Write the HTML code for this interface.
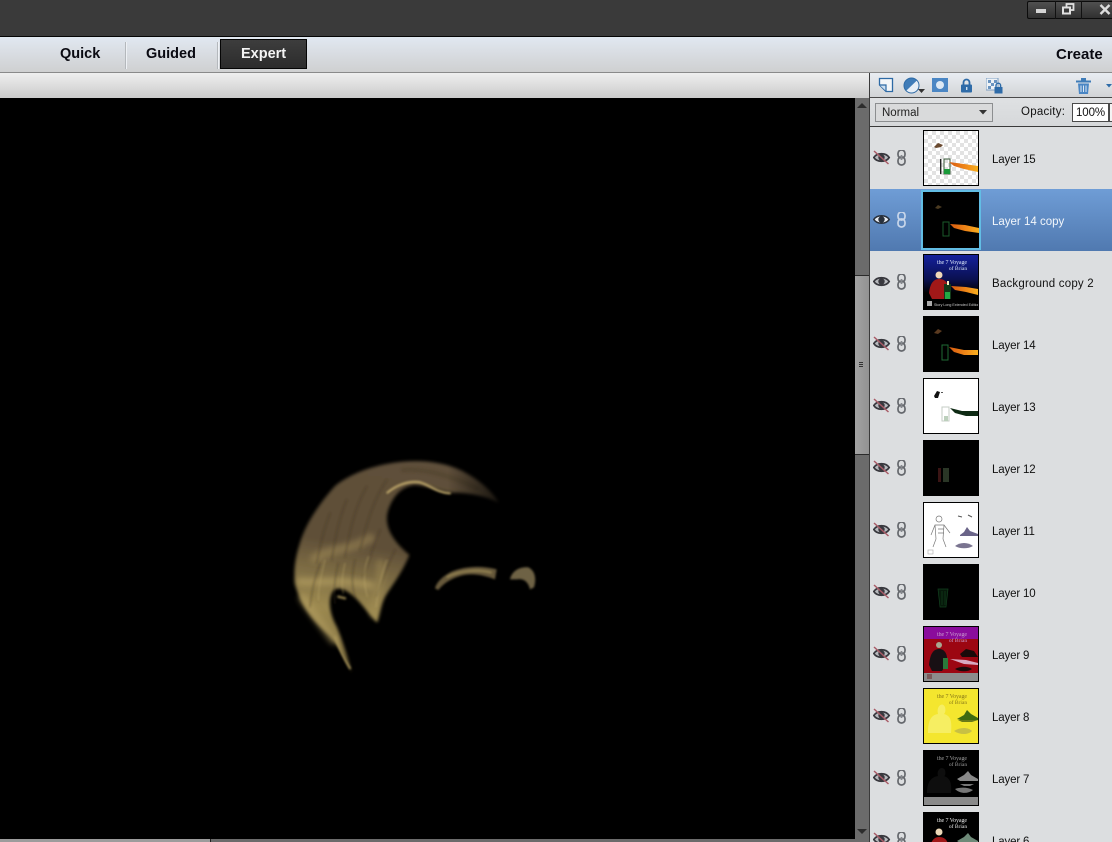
<!DOCTYPE html>
<html lang="en">
<head>
<meta charset="utf-8">
<title>Photoshop Elements - Expert</title>
<style>
html,body{margin:0;padding:0;width:1112px;height:842px;overflow:hidden;background:#000}
*{box-sizing:border-box}
body{position:relative;font-family:"Liberation Sans",sans-serif;color:#111}
.a{position:absolute}
.tab{position:absolute;font-weight:bold;font-size:14.5px;line-height:18px;color:#0a0a12;white-space:nowrap}
.row{position:absolute;left:870px;width:242px;height:62px}
.row .lbl{position:absolute;left:122px;top:24px;padding-top:1px;font-size:11.5px;line-height:16px;letter-spacing:-.15px;color:#111;white-space:nowrap}
.row.sel{background:linear-gradient(#6f9dd6,#5079b0)}
.row.sel .lbl{color:#f2f6fb}
.row svg.ic{position:absolute;left:3px;top:23px}
.th{position:absolute;left:53px;top:3px;width:56px;height:56px;border:1px solid #000;display:block}
.th>*{filter:blur(.35px)}
</style>
</head>
<body>
<svg width="0" height="0" style="position:absolute">
<defs>
<pattern id="chk" width="8" height="8" patternUnits="userSpaceOnUse"><rect width="8" height="8" fill="#fff"/><rect width="4" height="4" fill="#e2e2e2"/><rect x="4" y="4" width="4" height="4" fill="#e2e2e2"/></pattern>
<linearGradient id="fl" x1="0" x2="1"><stop offset="0" stop-color="#d85a10"/><stop offset=".6" stop-color="#f08a18"/><stop offset="1" stop-color="#f8b020"/></linearGradient>
<linearGradient id="bl" x1="0" x2="0" y1="0" y2="1"><stop offset="0" stop-color="#14209c"/><stop offset=".45" stop-color="#0a1050"/><stop offset=".7" stop-color="#000"/></linearGradient>
<linearGradient id="hair" gradientUnits="userSpaceOnUse" x1="300" y1="40" x2="200" y2="660"><stop offset="0" stop-color="#5e4f3a"/><stop offset=".4" stop-color="#5f4f38"/><stop offset=".55" stop-color="#7d6c44"/><stop offset=".72" stop-color="#9c8950"/><stop offset="1" stop-color="#7a6a3e"/></linearGradient>
<linearGradient id="fade" gradientUnits="userSpaceOnUse" x1="0" x2="670" y1="0" y2="0"><stop offset=".75" stop-color="#fff"/><stop offset="1" stop-color="#333"/></linearGradient>
<mask id="m" maskUnits="userSpaceOnUse" x="0" y="0" width="810" height="705"><rect width="810" height="705" fill="url(#fade)"/></mask>
<filter id="b1" x="-10%" y="-10%" width="120%" height="120%"><feGaussianBlur stdDeviation="5"/></filter>
<filter id="b2" x="-20%" y="-20%" width="140%" height="140%"><feGaussianBlur stdDeviation="3"/></filter>
<filter id="b3" x="-20%" y="-20%" width="140%" height="140%"><feGaussianBlur stdDeviation="9"/></filter>
<g id="eye"><path d="M.8 7.5C4 2.5 13 2.5 16.2 7.5C13 12.5 4 12.5 .8 7.5Z" fill="#b8babe" stroke="#38383e" stroke-width="1.7"/><circle cx="8.5" cy="7.5" r="3.2" fill="#38383e"/></g>
<g id="eyex"><use href="#eye"/><path d="M1 1L15.5 14" stroke="#a85a66" stroke-width="1.5"/></g>
<g id="eyeon"><path d="M.8 7.5C4 2.5 13 2.5 16.2 7.5C13 12.5 4 12.5 .8 7.5Z" fill="#e8edf4" stroke="#28303c" stroke-width="1.6"/><circle cx="8.5" cy="7.5" r="3.2" fill="#28303c"/></g>
<g id="chain" fill="none" stroke="#65686d" stroke-width="1.7"><rect x="2.5" y="0" width="7" height="8" rx="3.4"/><rect x="2.5" y="7" width="7" height="8" rx="3.4"/><path d="M6 5V10" stroke="#85888d"/></g>
<g id="chainw" fill="none" stroke="#c8d6ea" stroke-width="1.7"><rect x="2.5" y="0" width="7" height="8" rx="3.4"/><rect x="2.5" y="7" width="7" height="8" rx="3.4"/></g>
<g id="title" font-family="Liberation Serif,serif" text-anchor="middle"><text x="28" y="9" font-size="6" letter-spacing="-.1">the 7 Voyage</text><text x="34" y="15" font-size="5.5">of Brian</text></g>
</defs>
</svg>

<!-- top bar -->
<div class="a" style="left:0;top:0;width:1112px;height:36px;background:#3a3a3a"></div>
<div class="a" style="left:0;top:36px;width:1112px;height:1px;background:#050505"></div>
<!-- window buttons -->
<div class="a" style="left:1027px;top:1px;width:85px;height:18px;background:linear-gradient(#505050,#303030);border:1px solid #0c0c0c;border-right:0;border-radius:2px 0 0 2px"></div>
<div class="a" style="left:1055px;top:1px;width:1px;height:18px;background:#111"></div>
<div class="a" style="left:1081px;top:1px;width:1px;height:18px;background:#111"></div>
<div class="a" style="left:1036px;top:9px;width:10px;height:4px;background:#d4d4d4"></div>
<svg class="a" style="left:1062px;top:3px" width="13" height="12"><rect x="4.5" y="1" width="7" height="6" fill="none" stroke="#e0e0e0" stroke-width="1.8"/><rect x="1" y="4.5" width="7" height="6" fill="#3a3a3a" stroke="#e0e0e0" stroke-width="2"/></svg>
<svg class="a" style="left:1099px;top:4px" width="13" height="11"><path d="M1.5 1L10.5 10M10.5 1L1.5 10" stroke="#dcdcdc" stroke-width="2.4"/></svg>

<!-- mode bar -->
<div class="a" style="left:0;top:37px;width:1112px;height:36px;background:linear-gradient(#e1e8f1,#cfd0d1);border-bottom:1px solid #8a8a8a"></div>
<div class="tab" style="left:60px;top:45px">Quick</div>
<div class="a" style="left:125px;top:42px;width:1px;height:27px;background:#b4b8bc;box-shadow:1px 0 0 #eef1f5"></div>
<div class="tab" style="left:146px;top:45px">Guided</div>
<div class="a" style="left:217px;top:42px;width:1px;height:27px;background:#b4b8bc;box-shadow:1px 0 0 #eef1f5"></div>
<div class="a" style="left:220px;top:39px;width:87px;height:30px;background:linear-gradient(#3d3d3d,#2c2c2c);border:1px solid #050505"></div>
<div class="tab" style="left:241px;top:45px;color:#f4f4f4">Expert</div>
<div class="tab" style="left:1056px;top:46px;font-size:15px">Create</div>

<!-- options strip -->
<div class="a" style="left:0;top:73px;width:870px;height:25px;background:linear-gradient(#efefef,#cbcbcb)"></div>

<!-- canvas -->
<div class="a" style="left:0;top:98px;width:855px;height:744px;background:#000"></div>
<svg class="a" style="left:280px;top:450px" width="270" height="235" viewBox="0 0 810 705">
<g mask="url(#m)">
<g filter="url(#b1)">
<path d="M215 668C195 620 175 590 150 560C115 525 75 490 52 425C38 385 42 335 58 285C72 235 105 175 165 108C215 68 290 42 370 35C430 30 490 36 545 62C590 85 630 115 657 158C610 135 565 130 530 128C490 130 450 108 405 105C365 108 335 140 322 190C315 230 335 270 388 315C365 370 340 400 315 440C300 470 298 495 292 518C270 500 240 450 210 430C190 415 170 408 158 425C142 450 150 495 170 530C190 580 205 630 215 668Z" fill="url(#hair)"/>
</g>
<g filter="url(#b3)" fill="none" stroke-linecap="round">
<path d="M105 325C150 295 215 300 270 265" stroke="#a8925a" stroke-width="30" opacity=".45"/>
<path d="M60 395C110 400 180 385 270 405" stroke="#bba565" stroke-width="24" opacity=".55"/>
<path d="M68 445C95 485 130 530 160 570" stroke="#b8a262" stroke-width="26" opacity=".5"/>
<path d="M300 340C305 390 290 440 282 490" stroke="#a8945a" stroke-width="26" opacity=".4"/>
</g>
<g filter="url(#b2)" fill="none" stroke-linecap="round">
<path d="M322 128C350 105 385 92 420 97C450 105 470 128 510 130" stroke="#c8b070" stroke-width="6"/>
<path d="M165 560C180 600 195 630 210 655" stroke="#a8945a" stroke-width="6"/>
<path d="M175 440L195 445" stroke="#94824e" stroke-width="7"/>
<path d="M150 190C130 240 120 290 110 340M200 150C175 210 165 270 155 330M260 110C225 170 210 240 195 320M320 90C280 150 260 220 240 300M300 240C285 280 265 330 250 380M345 300C325 340 305 390 290 440M120 340C105 380 95 420 90 470M175 340C165 380 160 420 165 460M225 330C215 370 215 410 225 440" stroke="#3e3322" stroke-width="3" opacity=".55"/>
<path d="M135 330C125 370 115 410 115 450M195 340C185 380 185 410 190 430M265 320C250 360 250 400 262 440M320 330C305 370 295 420 288 470" stroke="#c8b270" stroke-width="3" opacity=".5"/>
<path d="M370 60C420 55 500 70 590 115" stroke="#4e402c" stroke-width="14" opacity=".5"/>
</g>
</g>
<g filter="url(#b2)">
<path d="M465 415C470 395 490 378 515 365C550 350 600 345 650 358L645 388C610 375 575 368 540 378C515 385 490 400 475 420Z" fill="#66583a"/>
<path d="M690 388C695 365 715 350 745 352C765 362 770 385 762 412L750 418C745 395 730 385 712 388Z" fill="#6e6244"/>
<path d="M500 382C540 360 595 358 635 368" stroke="#a08e58" stroke-width="4" fill="none"/>
</g>
</svg>

<!-- vertical scrollbar -->
<div class="a" style="left:855px;top:98px;width:14px;height:744px;background:#6b6b6b"></div>
<div class="a" style="left:855px;top:275px;width:14px;height:180px;background:linear-gradient(90deg,#a2a2a2,#929292);border-top:1px solid #2a2a2a;border-bottom:1px solid #2a2a2a"></div>
<div class="a" style="left:859px;top:362px;width:4px;height:1px;background:#333;box-shadow:0 2px 0 #333,0 4px 0 #333"></div>
<svg class="a" style="left:857px;top:103px" width="10" height="6"><path d="M5 0L10 5H0Z" fill="#2c2c2c"/></svg>
<svg class="a" style="left:857px;top:829px" width="10" height="6"><path d="M0 0H10L5 5Z" fill="#2c2c2c"/></svg>
<!-- horizontal scrollbar -->
<div class="a" style="left:0;top:839px;width:210px;height:3px;background:#9c9c9c"></div>
<div class="a" style="left:210px;top:839px;width:645px;height:3px;background:#6b6b6b;border-left:1px solid #222"></div>

<!-- panel -->
<div class="a" style="left:869px;top:73px;width:243px;height:769px;background:#dcdee0;border-left:1px solid #3a3a3a"></div>
<div class="a" style="left:870px;top:73px;width:242px;height:25px;background:linear-gradient(#e9edf2,#d2d4d6);border-bottom:1px solid #4a4a4a"></div>
<div class="a" style="left:870px;top:98px;width:242px;height:29px;background:linear-gradient(#dfe1e3,#d6d8da);border-bottom:1px solid #3a3a3a"></div>

<!-- panel icons -->
<svg class="a" style="left:878px;top:77px" width="16" height="16"><path d="M1.5 1.5H14.5V14.5H8L1.5 8Z" fill="#f4f6f8" stroke="#2d6aa5" stroke-width="1.3"/><path d="M8 14V8H1.5" fill="#cfe0f0" stroke="#2d6aa5" stroke-width="1.2"/></svg>
<svg class="a" style="left:903px;top:77px" width="22" height="18"><circle cx="8.5" cy="8.5" r="7.5" fill="#3f7cb8"/><path d="M3.2 13.8A7.5 7.5 0 0 0 14 3.4Z" fill="#e6eef6"/><circle cx="8.5" cy="8.5" r="7.5" fill="none" stroke="#2d6aa5"/><path d="M15 12H22L18.5 16Z" fill="#333"/></svg>
<svg class="a" style="left:932px;top:78px" width="16" height="14"><rect width="16" height="14" fill="#4a86c4"/><circle cx="8" cy="7" r="4" fill="#dce8f4"/></svg>
<svg class="a" style="left:960px;top:78px" width="13" height="15"><path d="M3.5 7V4.5a3 3 0 0 1 6 0V7" fill="none" stroke="#2e6ba8" stroke-width="1.8"/><rect x="1" y="6.5" width="11" height="8" rx="1" fill="#2e6ba8"/><rect x="6" y="9" width="1.4" height="3" fill="#cfe0f0"/></svg>
<svg class="a" style="left:986px;top:78px" width="17" height="16"><rect x="0" y="0" width="12" height="12" fill="#eef2f6" stroke="#7a9cc0"/><rect x="2" y="2" width="3" height="3" fill="#6a94c0"/><rect x="8" y="2" width="3" height="3" fill="#6a94c0"/><rect x="5" y="5" width="3" height="3" fill="#6a94c0"/><rect x="2" y="8" width="3" height="3" fill="#6a94c0"/><path d="M10 9V7.5a2.3 2.3 0 0 1 4.6 0V9" fill="none" stroke="#2e6ba8" stroke-width="1.4"/><rect x="8.5" y="9" width="8" height="6.5" fill="#2e6ba8"/></svg>
<svg class="a" style="left:1076px;top:78px" width="15" height="16"><rect x="0" y="2.5" width="15" height="2" fill="#3f7cb8"/><rect x="5" y="0" width="5" height="2.5" fill="#3f7cb8"/><path d="M2 5.5H13L12 16H3Z" fill="#4a86c4"/><path d="M5 7.5V14M7.5 7.5V14M10 7.5V14" stroke="#dce8f4"/></svg>
<svg class="a" style="left:1106px;top:84px" width="6" height="4"><path d="M0 0H6L3 3.5Z" fill="#2e6ba8"/></svg>

<!-- blend row -->
<div class="a" style="left:875px;top:103px;width:118px;height:19px;background:#d9dadb;border:1px solid #8c8e90;font-size:11.5px;line-height:18px;padding-left:6px;color:#222">Normal</div>
<svg class="a" style="left:979px;top:110px" width="8" height="5"><path d="M0 0H8L4 4.5Z" fill="#333"/></svg>
<div class="a" style="left:1021px;top:104px;font-size:11.5px;line-height:16px;letter-spacing:.25px;color:#111">Opacity:</div>
<div class="a" style="left:1072px;top:103px;width:37px;height:19px;background:#fff;border:1px solid #4a4a4a;font-size:11.5px;line-height:18px;padding-left:3px;letter-spacing:-.1px;color:#111">100%</div>
<div class="a" style="left:1109px;top:103px;width:3px;height:19px;background:#f4f4f4;border:1px solid #4a4a4a;border-right:0"></div>

<!-- layers -->
<div class="row" style="top:127px"><svg class="ic" width="40" height="16"><use href="#eyex"/><use href="#chain" x="22.5"/></svg>
<svg class="th" viewBox="0 0 54 54"><rect width="54" height="54" fill="url(#chk)"/><path d="M10 16L14 12L19 14L17 16L12 17Z" fill="#6a4a30"/><rect x="16" y="28" width="1.4" height="15" fill="#222"/><rect x="20" y="28" width="6" height="15" fill="none" stroke="#3a5a3a"/><rect x="20" y="38" width="6" height="5" fill="#1a9a3a"/><path d="M25 31L40 33L54 35V41L40 38L30 35Z" fill="url(#fl)"/></svg>
<div class="lbl">Layer 15</div></div>

<div class="row sel" style="top:189px"><svg class="ic" width="40" height="16"><use href="#eyeon"/><use href="#chainw" x="22.5"/></svg>
<svg class="th" style="left:51px;top:1px;width:60px;height:60px;border:2px solid #62bde4" viewBox="0 0 56 56"><rect width="56" height="56" fill="#000"/><path d="M12 16L15 13L19 15L15 17Z" fill="#4a3a20"/><rect x="20" y="30" width="6" height="14" fill="none" stroke="#1a5a2a"/><path d="M27 32L42 33L56 36V41L42 39L31 36Z" fill="url(#fl)"/></svg>
<div class="lbl" style="letter-spacing:0">Layer 14 copy</div></div>

<div class="row" style="top:251px"><svg class="ic" width="40" height="16"><use href="#eye"/><use href="#chain" x="22.5"/></svg>
<svg class="th" viewBox="0 0 54 54"><rect width="54" height="54" fill="url(#bl)"/><g fill="#d8e4f8"><use href="#title"/></g><circle cx="15" cy="20" r="3.5" fill="#f0d8b8"/><path d="M5 38C6 28 10 24 15 24C21 24 25 28 24 36L20 44H8Z" fill="#a01818"/><rect x="20" y="29" width="7" height="15" fill="#123a1a"/><rect x="21" y="37" width="5" height="7" fill="#22a844"/><path d="M23 26h2v4h-2z" fill="#f8f0c0"/><path d="M27 31L42 32L54 34V40L42 37L31 35Z" fill="url(#fl)"/><rect x="3" y="46" width="5" height="5" fill="#aaa"/><text x="10" y="51" font-size="3.6" fill="#ccc" font-family="Liberation Sans,sans-serif">Story Long Extended Edition</text></svg>
<div class="lbl" style="letter-spacing:.2px">Background copy 2</div></div>

<div class="row" style="top:313px"><svg class="ic" width="40" height="16"><use href="#eyex"/><use href="#chain" x="22.5"/></svg>
<svg class="th" viewBox="0 0 54 54"><rect width="54" height="54" fill="#000"/><path d="M10 16L14 12L18 14L14 17Z" fill="#5a3a20"/><rect x="18" y="28" width="6" height="15" fill="none" stroke="#1f6a34"/><path d="M25 30L40 33L54 33V38L40 38L30 35Z" fill="url(#fl)"/></svg>
<div class="lbl">Layer 14</div></div>

<div class="row" style="top:375px"><svg class="ic" width="40" height="16"><use href="#eyex"/><use href="#chain" x="22.5"/></svg>
<svg class="th" viewBox="0 0 54 54"><rect width="54" height="54" fill="#fff"/><path d="M10 17L13 12L16 13L14 19L11 19Z" fill="#111"/><path d="M17 13h2v1h-2z" fill="#555"/><rect x="18" y="28" width="7" height="14" fill="none" stroke="#c4ccc4"/><rect x="20" y="37" width="4" height="5" fill="#bcd0bc"/><path d="M26 29L38 32L54 32V37L42 37L31 34Z" fill="#0e2a14"/></svg>
<div class="lbl">Layer 13</div></div>

<div class="row" style="top:437px"><svg class="ic" width="40" height="16"><use href="#eyex"/><use href="#chain" x="22.5"/></svg>
<svg class="th" viewBox="0 0 54 54"><rect width="54" height="54" fill="#000"/><rect x="14" y="27" width="3" height="14" fill="#3a1414"/><rect x="19" y="27" width="6" height="14" fill="#2a3626"/></svg>
<div class="lbl">Layer 12</div></div>

<div class="row" style="top:499px"><svg class="ic" width="40" height="16"><use href="#eyex"/><use href="#chain" x="22.5"/></svg>
<svg class="th" viewBox="0 0 54 54"><rect width="54" height="54" fill="#fff"/><g fill="none" stroke="#777" stroke-width=".7"><circle cx="15" cy="16" r="3"/><path d="M7 32L11 22H20L26 30M11 22L12 36L9 44M20 22L19 36L22 44M14 26H20M14 30H20"/></g><path d="M36 32L40 29L43 24L46 28L54 31V33H36Z" fill="#6a6488"/><path d="M31 43C36 39 44 39 49 43C44 46 36 46 31 43Z" fill="#7a7490"/><path d="M34 13L38 14M44 12L48 14" stroke="#555"/><rect x="4" y="47" width="5" height="4" fill="none" stroke="#aaa" stroke-width=".6"/></svg>
<div class="lbl">Layer 11</div></div>

<div class="row" style="top:561px"><svg class="ic" width="40" height="16"><use href="#eyex"/><use href="#chain" x="22.5"/></svg>
<svg class="th" viewBox="0 0 54 54"><rect width="54" height="54" fill="#000"/><path d="M14 24H24L22 42H16Z" fill="#06180a" stroke="#12401e" stroke-width=".7"/><path d="M18 26V40M21 26V40" stroke="#133f1f" stroke-width=".7"/></svg>
<div class="lbl">Layer 10</div></div>

<div class="row" style="top:623px"><svg class="ic" width="40" height="16"><use href="#eyex"/><use href="#chain" x="22.5"/></svg>
<svg class="th" viewBox="0 0 54 54"><rect width="54" height="54" fill="#9c0612"/><rect width="54" height="12" fill="#8a0c9c"/><g fill="#c89ad0"><use href="#title"/></g><circle cx="15" cy="18" r="3" fill="#a8a890"/><path d="M5 38C6 26 10 22 15 22C20 22 24 26 23 36L18 44H8Z" fill="#181014"/><rect x="19" y="31" width="5" height="11" fill="#2a7a3a"/><path d="M26 32L42 33L54 36V38L40 37Z" fill="#d8a8c0"/><path d="M36 27L42 22L50 24L54 30H38Z" fill="#1a0a0a"/><path d="M31 42C36 39 44 39 48 42C44 45 36 45 31 42Z" fill="#1a0a0a"/><rect y="46" width="54" height="8" fill="#8c8c8c"/><rect x="3" y="47" width="5" height="5" fill="#7a5a5a"/></svg>
<div class="lbl">Layer 9</div></div>

<div class="row" style="top:685px"><svg class="ic" width="40" height="16"><use href="#eyex"/><use href="#chain" x="22.5"/></svg>
<svg class="th" viewBox="0 0 54 54"><rect width="54" height="54" fill="#f4e62e"/><g fill="#8a7a18"><use href="#title"/></g><path d="M4 44C4 30 8 26 14 25C12 18 18 12 21 18C22 22 21 24 20 25C27 27 28 32 27 44Z" fill="#f6ee62"/><path d="M33 30L40 26L43 21L47 25L54 29V31L44 33Z" fill="#3e6a10"/><path d="M34 31H54L48 33H38Z" fill="#6a7a18"/><path d="M30 42C36 38 44 38 48 42C44 46 36 46 30 42Z" fill="#c8c044"/></svg>
<div class="lbl">Layer 8</div></div>

<div class="row" style="top:747px"><svg class="ic" width="40" height="16"><use href="#eyex"/><use href="#chain" x="22.5"/></svg>
<svg class="th" viewBox="0 0 54 54"><rect width="54" height="54" fill="#000"/><g fill="#9a9a9a"><use href="#title"/></g><path d="M3 42C3 30 8 26 14 25C12 19 18 14 21 19C22 23 21 25 20 25C26 27 28 32 27 42Z" fill="#0e0e0e"/><path d="M33 28L40 24L44 20L47 24L54 28V30H36Z" fill="#888"/><path d="M36 33H50L46 35H40Z" fill="#777"/><path d="M31 38C36 36 44 36 49 39C44 43 36 43 31 38Z" fill="#777"/><rect y="46" width="54" height="8" fill="#8a8a8a"/></svg>
<div class="lbl">Layer 7</div></div>

<div class="row" style="top:809px;height:33px;overflow:hidden"><svg class="ic" width="40" height="16"><use href="#eyex"/><use href="#chain" x="22.5"/></svg>
<svg class="th" viewBox="0 0 54 54"><rect width="54" height="54" fill="#000"/><g fill="#e4e4e4"><use href="#title"/></g><circle cx="15" cy="19" r="3.5" fill="#ecd8b8"/><path d="M5 40C6 28 10 24 15 24C21 24 25 28 24 36L20 44H8Z" fill="#a01818"/><path d="M33 28L40 24L44 20L47 24L54 28V30H36Z" fill="#6e8a78"/></svg>
<div class="lbl">Layer 6</div></div>
</body>
</html>
